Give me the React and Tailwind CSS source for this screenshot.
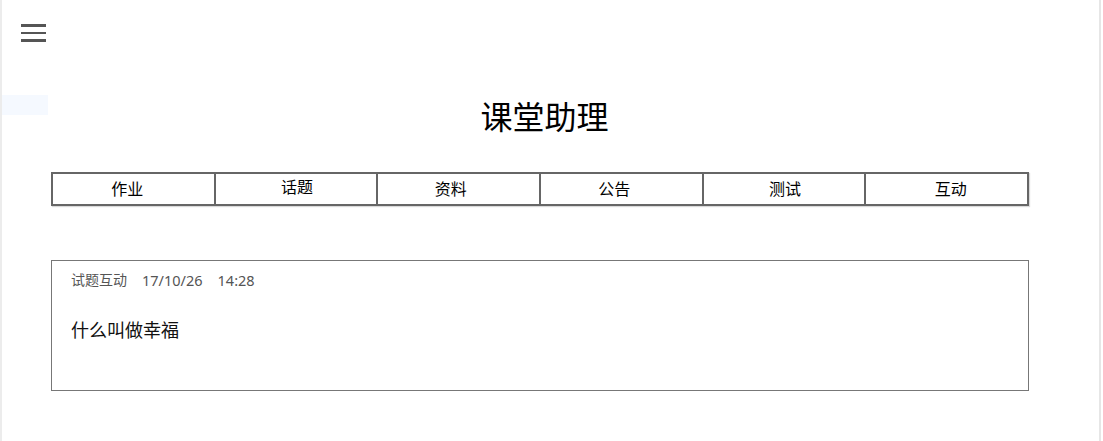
import React from "react";

const tabs = [
  { label: "作业", shift: "-translate-x-[6px]" },
  { label: "话题", shift: "translate-x-[1px] -translate-y-[2px]" },
  { label: "资料", shift: "-translate-x-[8px]" },
  { label: "公告", shift: "-translate-x-[7px]" },
  { label: "测试", shift: "translate-x-[1px]" },
  { label: "互动", shift: "translate-x-[4px]" },
];

export default function App() {
  return (
    <div
      className="relative w-[1103px] h-[441px] bg-white text-black border-l-2 border-[#ececec] overflow-hidden"
      style={{ fontFamily: '"Noto Sans", "Noto Sans CJK SC", sans-serif' }}
    >
      <div className="w-[1099px] h-full border-r-2 border-[#e6e6e6]">
        {/* Menu */}
        <div className="pt-[24px] pl-[19px] h-[95px]">
          <div className="flex flex-col gap-[5px] w-[25px]">
            <span className="block h-[2.5px] bg-[#555]" />
            <span className="block h-[2.5px] bg-[#555]" />
            <span className="block h-[2.5px] bg-[#555]" />
          </div>
        </div>
        <div className="w-[48px] h-[20px] bg-[#f5f9ff] -ml-[2px]" />

        {/* Title */}
        <h1 className="-mt-[20px] text-center text-[32px] leading-[44px] pr-[12px]">
          课堂助理
        </h1>

        {/* Tabs */}
        <div className="mt-[33px] ml-[49px] w-[978px] flex border-y-2 border-l-2 border-[#666] shadow-[1px_1px_1px_rgba(0,0,0,0.15)]">
          {tabs.map((t) => (
            <div
              key={t.label}
              className="flex-1 h-[30px] flex items-center justify-center text-[16px] border-r-2 border-[#666]"
            >
              <span className={`block ${t.shift}`}>{t.label}</span>
            </div>
          ))}
        </div>

        {/* Card */}
        <div className="mt-[54px] ml-[49px] w-[978px] h-[131px] border border-[#777] px-[19px] pt-[9px]">
          <div className="flex gap-[15px] text-[14px] text-[#555] leading-[20px]">
            <span>试题互动</span>
            <span className="text-[14.5px]">17/10/26</span>
            <span className="text-[14.5px]">14:28</span>
          </div>
          <p className="mt-[27px] text-[18px] leading-[26px] text-[#111]">什么叫做幸福</p>
        </div>
      </div>
    </div>
  );
}
